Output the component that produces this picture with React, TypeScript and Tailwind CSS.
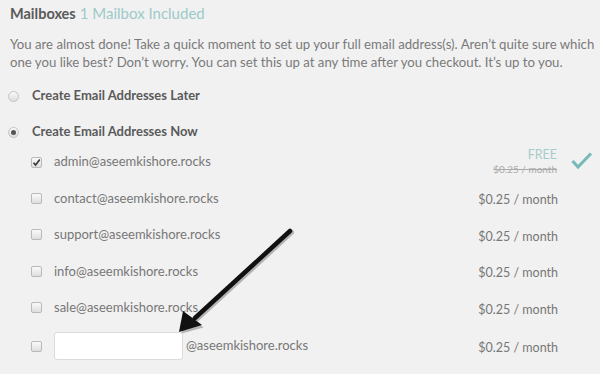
import React from 'react';

const emails = ['contact', 'support', 'info', 'sale'];

const Checkbox: React.FC<{ checked?: boolean }> = ({ checked }) => (
  <span className="w-[11px] h-[11px] rounded-[2px] border border-[#b9b9b9] bg-gradient-to-b from-[#fafafa] to-[#dedede] flex items-center justify-center shrink-0">
    {checked && (
      <svg width="9" height="9" viewBox="0 0 9 9">
        <path d="M1.5 4.8 L3.6 7 L7.8 1.6" fill="none" stroke="#333" strokeWidth="1.6" />
      </svg>
    )}
  </span>
);

const Radio: React.FC<{ checked?: boolean }> = ({ checked }) => (
  <span className="w-[11px] h-[11px] rounded-full border border-[#c4c4c4] bg-gradient-to-b from-[#fafafa] to-[#dcdcdc] flex items-center justify-center shrink-0">
    {checked && <span className="w-[5px] h-[5px] rounded-full bg-[#555]" />}
  </span>
);

const Price = () => <span className="text-[12.5px] text-[#777]">$0.25 / month</span>;

export default function App() {
  return (
    <div
      className="relative w-[600px] h-[374px] overflow-hidden bg-[#f1f1f1] text-[#777]"
      style={{ fontFamily: 'Lato, "Open Sans", sans-serif' }}
    >
      <div className="pl-[10px] pr-[5px] pt-[2px]">
        {/* Heading */}
        <div className="flex items-baseline gap-[4px] h-[22px]">
          <span className="text-[14.5px] font-bold text-[#5a5a5a]">Mailboxes</span>
          <span className="text-[15px] text-[#9ccaca]">1 Mailbox Included</span>
        </div>

        <p className="mt-[11px] w-[585px] text-[13.2px] leading-[18px] text-[#7a7a7a]">
          You are almost done! Take a quick moment to set up your full email address(s). Aren’t quite sure which
          <br />
          one you like best? Don’t worry. You can set this up at any time after you checkout. It’s up to you.
        </p>

        {/* Options */}
        <div className="mt-[13px] flex items-center gap-[13px] -ml-[2px] h-[24px] text-[13px] font-bold text-[#5a5a5a]">
          <Radio />
          <span>Create Email Addresses Later</span>
        </div>
        <div className="mt-[12px] flex items-center gap-[13px] -ml-[2px] h-[24px] text-[13px] font-bold text-[#5a5a5a]">
          <Radio checked />
          <span>Create Email Addresses Now</span>
        </div>

        {/* Mailbox list */}
        <div className="pl-[21px] flex flex-col">
          <div className="flex items-center h-[36px]">
            <Checkbox checked />
            <span className="ml-[12px] text-[13px]">admin@aseemkishore.rocks</span>
            <div className="ml-auto flex flex-col items-end leading-[15px]">
              <span className="text-[12.5px] text-[#a6cccc]">FREE</span>
              <span className="text-[10px] text-[#aaa] line-through">$0.25 / month</span>
            </div>
            <svg className="ml-[14px] mr-[2px] -mt-[2px]" width="22" height="20" viewBox="0 0 22 20">
              <path d="M1.5 10 L7 16 L20 2.5" fill="none" stroke="#77b9b9" strokeWidth="3" />
            </svg>
          </div>
          {emails.map((e) => (
            <div key={e} className="flex items-center h-[36.5px] pr-[37px]">
              <Checkbox />
              <span className="ml-[12px] text-[13px]">{e}@aseemkishore.rocks</span>
              <span className="ml-auto">
                <Price />
              </span>
            </div>
          ))}
          <div className="flex items-center h-[40px] pr-[37px]">
            <Checkbox />
            <input
              type="text"
              className="ml-[12px] w-[129px] h-[28px] rounded-[3px] border border-[#dcdcdc] bg-white outline-none"
            />
            <span className="ml-[3px] text-[13px]">@aseemkishore.rocks</span>
            <span className="ml-auto">
              <Price />
            </span>
          </div>
        </div>
      </div>

      {/* Annotation arrow */}
      <svg className="absolute left-0 top-0 pointer-events-none" width="600" height="374">
        <g transform="translate(1.5,1.5)" opacity="0.25">
          <path d="M290 231 L195 318" stroke="#000" strokeWidth="5" strokeLinecap="round" />
          <path d="M180 332 L184 312 L202 326 Z" fill="#000" />
        </g>
        <path d="M290 231 L195 318" stroke="#111" strokeWidth="4.5" strokeLinecap="round" />
        <path d="M179 332 L183 311 L202 325 Z" fill="#111" />
      </svg>
    </div>
  );
}
